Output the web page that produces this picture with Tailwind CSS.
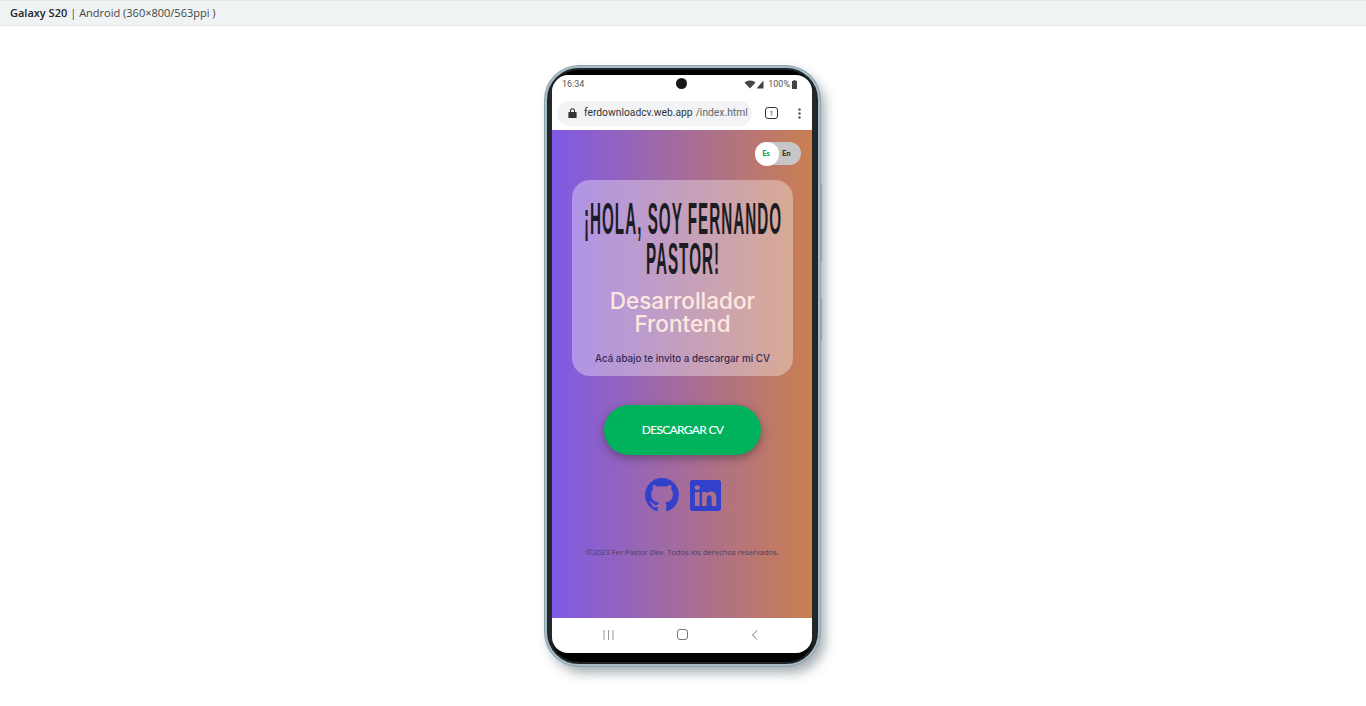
<!DOCTYPE html>
<html lang="en">
    <head>
        <meta charset="UTF-8" />
        <meta name="viewport" content="width=device-width, initial-scale=1.0" />
        <script src="https://cdn.jsdelivr.net/npm/@tailwindcss/browser@4"></script>
        <title>Galaxy S20</title>
    </head>
    <body class="h-[706px] overflow-hidden bg-white font-['Open_Sans',sans-serif]">
        <!-- device bar -->
        <div class="flex h-[26px] items-center border-y border-[#e3e7e8] bg-[#f0f3f4] pl-[10px] text-[11px] text-[#444]">
            <span class="font-semibold text-[#222]">Galaxy S20</span>
            <span class="ml-[3px]">| Android (360×800/563ppi )</span>
        </div>

        <div class="flex justify-center pt-[40px]">
            <!-- phone -->
            <div class="relative ml-[-1px] h-[600px] w-[275px] rounded-[34px] bg-[#1f2427] p-[2px] shadow-[5px_7px_12px_rgba(60,75,85,0.45)] ring-1 ring-[#8fa5b0] [border:2px_solid_#a9bcc6]">
                <div class="absolute top-[116px] right-[-4px] h-[78px] w-[1px] bg-[#8fa5b0]"></div>
                <div class="absolute top-[230px] right-[-4px] h-[42px] w-[1px] bg-[#8fa5b0]"></div>
                <div class="h-full overflow-hidden rounded-[30px] bg-[linear-gradient(to_bottom,#000_0,#000_6px,#23282b_20px,#23282b_570px,#000_584px)] pt-[5px] pr-[4px] pb-[9px] pl-[3px]">
                    <div class="flex h-full flex-col overflow-hidden rounded-[16px] bg-white">
                        <!-- status bar -->
                        <div class="relative flex h-[21px] shrink-0 items-center justify-between pr-[15px] pb-[2px] pl-[10px] font-['Roboto',sans-serif] text-[9px] text-[#555]">
                            <span>16:34</span>
                            <div class="absolute top-[3px] left-[124px] size-[11px] rounded-full bg-[#16181a]"></div>
                            <div class="flex items-center gap-[2px]">
                                <svg width="21" height="9" viewBox="0 0 20 9" class="fill-[#444]">
                                    <path d="M0 2.500C3-.3 8-.3 11 2.500L5.500 8.500z" />
                                    <path d="M19 .5V8.500H12z" />
                                </svg>
                                <span class="ml-[1px]">100%</span>
                                <svg width="5" height="9" viewBox="0 0 5 9" class="fill-[#444]">
                                    <path d="M1.500 0h2v1H5v8H0V1h1.500z" />
                                </svg>
                            </div>
                        </div>
                        <!-- url bar -->
                        <div class="flex h-[34px] shrink-0 items-center pr-[10px] pl-[5px]">
                            <div class="flex h-[25px] w-[195px] shrink-0 items-center whitespace-nowrap rounded-full bg-[#f1f3f4] pl-[11px] font-['Roboto',sans-serif] text-[10.300px]">
                                <svg width="9" height="10" viewBox="0 0 9 10" class="shrink-0 fill-[#333]">
                                    <path d="M1 4h1V2.700a2.500 2.500 0 015 0V4h1a.6.6 0 01.6.6v4.800a.6.6 0 01-.6.6H1a.6.6 0 01-.6-.6V4.600A.6.6 0 011 4zm2-1.300V4h3V2.700a1.500 1.500 0 00-3 0z" />
                                </svg>
                                <span class="ml-[7px] text-[#333]">ferdownloadcv.web.app</span>
                                <span class="ml-[3px] text-[#666]">/index.html</span>
                            </div>
                            <div class="ml-[13px] flex h-[12px] w-[13px] shrink-0 items-center justify-center rounded-[3px] border border-[#333] text-[7px] leading-none text-[#333]">1</div>
                            <svg width="3" height="11" viewBox="0 0 3 11" class="ml-[20px] shrink-0 fill-[#555]">
                                <circle cx="1.500" cy="1.500" r="1.200" />
                                <circle cx="1.500" cy="5.500" r="1.200" />
                                <circle cx="1.500" cy="9.500" r="1.200" />
                            </svg>
                        </div>

                        <!-- page -->
                        <div class="flex h-[488px] shrink-0 flex-col items-center bg-[linear-gradient(to_right,#7f59e6,#ca7f50)] pl-[1px]">
                            <div class="flex w-full justify-end pt-[12px] pr-[11px]">
                                <div class="flex h-[23px] w-[46px] items-center rounded-full bg-[#c6c6c6] font-['Lato',sans-serif] text-[7.500px] font-black">
                                    <div class="flex size-[24px] items-center justify-center rounded-full bg-white pr-[2px] text-[#00a65a]">Es</div>
                                    <span class="ml-[3px] text-[#333]">En</span>
                                </div>
                            </div>

                            <div class="mt-[15px] flex h-[196px] w-[221px] flex-col items-center rounded-[18px] bg-white/35 pt-[19px] text-center">
                                <h1 class="w-[700px] shrink-0 origin-top scale-x-[0.338] font-['Liberation_Sans',sans-serif] text-[45px] leading-[40px] font-bold tracking-[3px] whitespace-nowrap text-[#1c1c22]">¡HOLA, SOY FERNANDO<br />PASTOR!</h1>
                                <h2 class="mt-[10px] font-['Inter',sans-serif] text-[22.500px] leading-[23px] font-medium text-[#fde8e0]">Desarrollador<br />Frontend</h2>
                                <p class="mt-[17px] font-['Inter',sans-serif] text-[9.800px] font-medium whitespace-nowrap text-[#332a55]">Acá abajo te invito a descargar mi CV</p>
                            </div>

                            <div class="mt-[29px] flex h-[50px] w-[157px] items-center justify-center rounded-full bg-[#00b25c] font-['Lato',sans-serif] text-[12px] font-medium tracking-[-0.7px] text-white shadow-[0_3px_8px_rgba(60,40,60,0.5)]">DESCARGAR CV</div>

                            <div class="mt-[23px] flex items-center gap-[11px]">
                                <svg width="34" height="34" viewBox="0 0 16 16" class="fill-[#3340c9]">
                                    <path d="M8 0C3.580 0 0 3.580 0 8c0 3.540 2.290 6.530 5.470 7.590.4.07.55-.17.55-.38 0-.19-.01-.82-.01-1.490-2.010.37-2.530-.49-2.690-.94-.09-.23-.48-.94-.82-1.130-.28-.15-.68-.52-.01-.53.63-.01 1.080.58 1.230.82.72 1.210 1.870.87 2.330.66.07-.52.28-.87.51-1.070-1.780-.2-3.640-.89-3.640-3.950 0-.87.31-1.590.82-2.150-.08-.2-.36-1.020.08-2.120 0 0 .67-.21 2.200.82.64-.18 1.320-.27 2-.27.68 0 1.360.09 2 .27 1.530-1.040 2.200-.82 2.200-.82.44 1.100.16 1.920.08 2.120.51.56.82 1.270.82 2.150 0 3.070-1.870 3.750-3.650 3.950.29.25.54.73.54 1.480 0 1.070-.01 1.930-.01 2.200 0 .21.15.46.55.38A8.013 8.013 0 0016 8c0-4.420-3.580-8-8-8z" />
                                </svg>
                                <svg width="31" height="31" viewBox="0 0 16 16" class="fill-[#3340c9]">
                                    <path d="M0 1.146C0 .513.526 0 1.175 0h13.650C15.474 0 16 .513 16 1.146v13.708c0 .633-.526 1.146-1.175 1.146H1.175C.526 16 0 15.487 0 14.854V1.146zm4.943 12.248V6.169H2.542v7.225h2.401zm-1.200-8.212c.837 0 1.358-.554 1.358-1.248-.015-.709-.52-1.248-1.342-1.248-.822 0-1.359.54-1.359 1.248 0 .694.521 1.248 1.327 1.248h.016zm4.908 8.212V9.359c0-.216.016-.432.08-.586.173-.431.568-.878 1.232-.878.869 0 1.216.662 1.216 1.634v3.865h2.401V9.250c0-2.220-1.184-3.252-2.764-3.252-1.274 0-1.845.7-2.165 1.193v.025h-.016a5.540 5.540 0 01.016-.025V6.169h-2.400c.03.678 0 7.225 0 7.225h2.400z" />
                                </svg>
                            </div>

                            <p class="mt-[35px] text-[7.600px] whitespace-nowrap text-[#4a3f5e]">©2023 Fer Pastor Dev. Todos los derechos reservados.</p>
                        </div>

                        <!-- nav bar -->
                        <div class="flex flex-1 items-center justify-between pr-[54px] pb-[2px] pl-[51px]">
                            <svg width="11" height="10" viewBox="0 0 11 10" class="stroke-[#999]" fill="none">
                                <path d="M1 0v10M5.500 0v10M10 0v10" />
                            </svg>
                            <svg width="11" height="11" viewBox="0 0 11 11" class="stroke-[#777]" fill="none">
                                <rect x="0.500" y="0.500" width="10" height="10" rx="2.500" />
                            </svg>
                            <svg width="7" height="10" viewBox="0 0 7 10" class="stroke-[#777]" fill="none">
                                <path d="M6 .5L1.500 5 6 9.500" />
                            </svg>
                        </div>
                    </div>
                </div>
            </div>
        </div>
    </body>
</html>
